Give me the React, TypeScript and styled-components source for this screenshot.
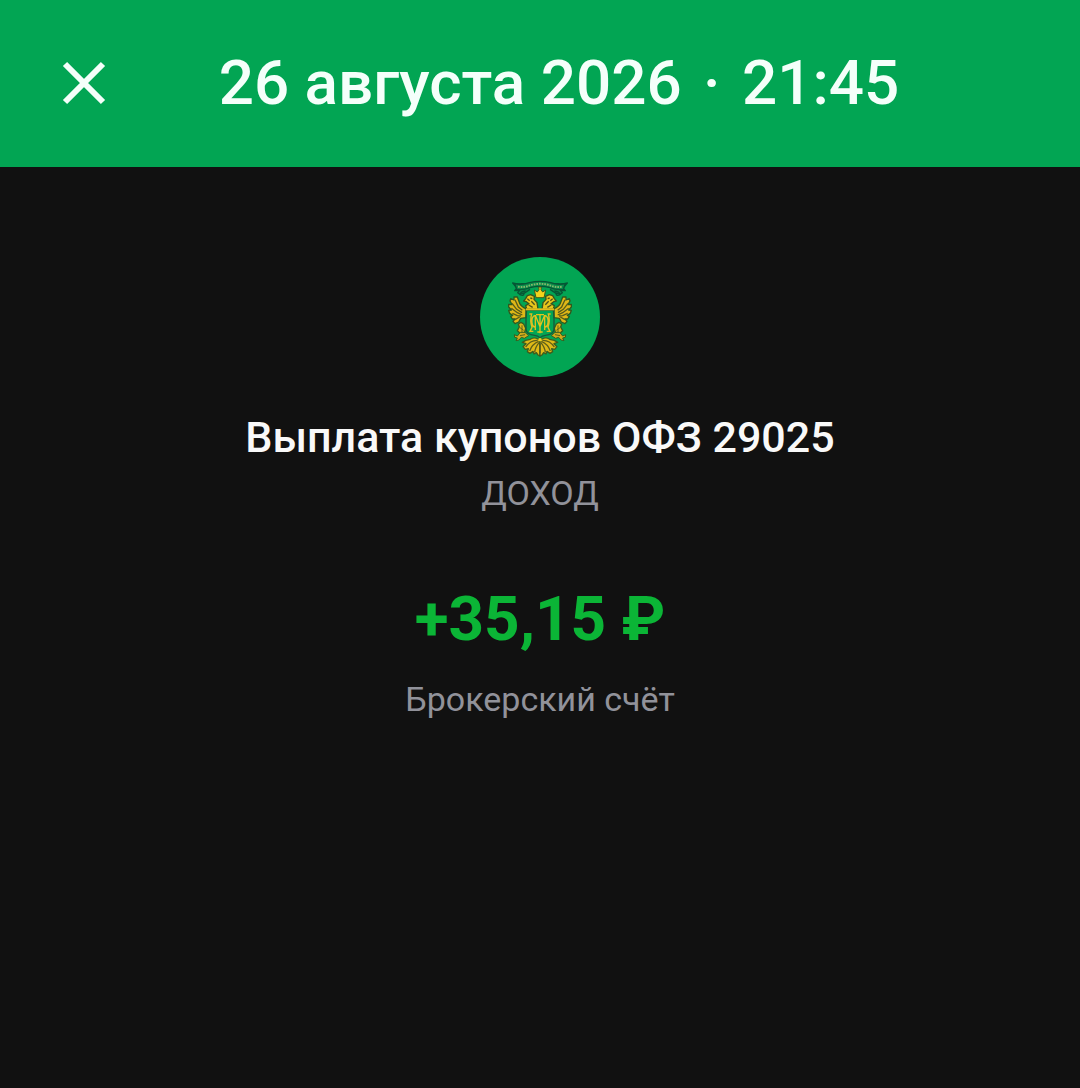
import styled, { createGlobalStyle } from "styled-components";

const GlobalStyle = createGlobalStyle`
  body {
    margin: 0;
    background: #111111;
    font-family: Roboto, "Open Sans", sans-serif;
  }
`;

const Page = styled.div`
  min-height: 100vh;
  display: flex;
  flex-direction: column;
`;

const Header = styled.header`
  display: flex;
  align-items: center;
  padding: 44px 68px 45px 62px;
  background: #02a553;
`;

const HeaderTitle = styled.h1`
  flex: 1;
  margin: 0;
  color: #f4fffa;
  font-size: 62px;
  font-weight: 500;
  line-height: 78px;
  text-align: center;
`;

const Separator = styled.span`
  margin: 0 6px;
`;

const CloseButton = styled.button`
  display: flex;
  padding: 0;
  border: 0;
  background: none;
  color: #f4fffa;
  cursor: pointer;
`;

const Details = styled.main`
  display: flex;
  flex-direction: column;
  align-items: center;
  padding: 90px 24px;
  text-align: center;
`;

const Title = styled.h2`
  margin: 32px 0 0;
  color: #f9f9f9;
  font-size: 43px;
  font-weight: 500;
  line-height: 56px;
`;

const Caption = styled.p`
  margin: 0;
  color: #91929a;
  font-size: 34px;
  font-weight: 400;
  line-height: 56px;
`;

const Amount = styled.p`
  margin: 58px 0 12px;
  color: #0bb536;
  font-size: 62px;
  font-weight: 700;
  line-height: 80px;
`;

// one side of the eagle, the other one is mirrored
const EmblemHalf = () => (
  <>
    <path
      d="M150 103 L134 114 L119 118 L113 113 L119 106 L104 107 L111 99 L98 84 Q113 88 126 86 L146 87"
      fill="#078b49"
      stroke="#075535"
      strokeWidth="4"
      strokeLinejoin="round"
    />
    <path
      d="M137 108 Q119 110 121 120 Q131 124 132 116"
      fill="none"
      stroke="#075535"
      strokeWidth="4"
    />
    <path
      d="M140 162 Q124 155 119 145 L112 126 L102 126 L102 135 L92 131 L90 138 L96 149 L86 148 L86 156 L94 165 L86 166 L89 175 L98 181 L92 184 L97 192 L105 192 L99 199 L105 206 L116 201 L122 190 L138 188 Z"
      fill="#dfb817"
      stroke="#2e5920"
      strokeWidth="4"
      strokeLinejoin="round"
    />
    <g fill="none" stroke="#575b1b" strokeWidth="4">
      <path d="M105 134 L115 156 L127 166" />
      <path d="M96 145 L110 163 L126 173" />
      <path d="M94 160 L112 173 L127 180" />
      <path d="M97 175 L112 182 L123 183" />
      <path d="M105 194 L119 186" />
    </g>
    <path
      d="M168 163 L140 162 L137 152 L147 146 L139 140 L131 138 L137 131 L142 122 L152 119 L163 124 L162 133 L171 143 L174 163 Z"
      fill="#e7c51c"
      stroke="#37531c"
      strokeWidth="4"
      strokeLinejoin="round"
    />
    <path
      d="M142 131 L149 137 M151 129 L157 131 M154 139 L164 149 M146 150 L158 157"
      fill="none"
      stroke="#4c501a"
      strokeWidth="4"
    />
    <path
      d="M123 202 L131 207 L137 220 L133 236 L122 236 L112 227 L118 216 L115 208 Z"
      fill="#dcb719"
      stroke="#365d20"
      strokeWidth="4"
      strokeLinejoin="round"
    />
    <path
      d="M121 232 L112 243 L103 239 L104 247 L112 249 L108 257 L117 255 L124 247 L133 250 L146 242 L135 232 Z"
      fill="#cfab1b"
      stroke="#365d20"
      strokeWidth="3"
      strokeLinejoin="round"
    />
    <path
      d="M120 218 L131 226 M126 211 L126 231 M120 242 L135 239"
      fill="none"
      stroke="#5c641d"
      strokeWidth="3"
    />
    <path
      d="M175 253 Q163 244 151 253 L137 256 L127 262 L138 266 L129 275 L136 283 L145 281 L142 290 L150 295 L159 289 L162 297 L169 293 L174 300 L180 303 L180 253 Z"
      fill="#dfb917"
      stroke="#3e5c1d"
      strokeWidth="4"
      strokeLinejoin="round"
    />
    <g fill="none" stroke="#5c5d1b" strokeWidth="4">
      <path d="M173 256 Q151 255 137 276" />
      <path d="M176 259 Q156 267 149 288" />
      <path d="M178 262 Q166 275 164 292" />
      <path d="M180 266 V294" />
    </g>
    <path
      d="M148 177 H155 Q149 197 156 217 L150 229 H160 M165 181 Q154 185 156 203 Q157 217 168 217 M166 180 V225"
      fill="none"
      stroke="#dfbf20"
      strokeWidth="4"
    />
  </>
);

const Emblem = () => (
  <svg width="120" height="120" viewBox="0 6 360 360" aria-hidden="true">
    <circle cx="180" cy="186" r="180" fill="#02a553" />
    <EmblemHalf />
    <g transform="translate(360 0) scale(-1 1)">
      <EmblemHalf />
    </g>
    <path
      d="M104 86 Q126 91 148 83 Q180 75 212 83 Q234 91 256 86 L250 103 Q230 106 210 98 Q180 90 150 98 Q130 106 110 103 Z"
      fill="#078b49"
      stroke="#075535"
      strokeWidth="4"
      strokeLinejoin="round"
    />
    <path
      d="M114 95 Q134 98 150 91 Q180 82 210 91 Q226 98 246 95"
      fill="none"
      stroke="#83b66b"
      strokeWidth="6"
      strokeDasharray="5 3"
    />
    <path
      d="M168 128 L163 105 L172 111 L177 104 L176 96 L184 96 L183 104 L188 111 L197 105 L192 128 Z"
      fill="#f4d31b"
      stroke="#41591d"
      strokeWidth="3"
      strokeLinejoin="round"
    />
    <path
      d="M138 165 L222 165 L222 222 Q221 239 196 241 Q187 242 180 248 Q173 242 164 241 Q139 239 138 222 Z"
      fill="#02a553"
      fillOpacity="0"
      stroke="#17583a"
      strokeWidth="4"
    />
    <path d="M138 163 H222" stroke="#e0bd1e" strokeWidth="6" />
    <path
      d="M180 178 V235 M168 179 H192 M166 181 L180 215 L194 181 M172 231 H188"
      fill="none"
      stroke="#e4c41e"
      strokeWidth="4"
    />
    <circle cx="180" cy="254" r="5" fill="#efd121" />
  </svg>
);

const App = () => {
  return (
    <Page>
      <GlobalStyle />
      <Header>
        <CloseButton type="button" aria-label="Закрыть">
          <svg width="44" height="44" viewBox="0 0 44 44">
            <path d="M3 3 L41 41 M41 3 L3 41" stroke="currentColor" strokeWidth="6" />
          </svg>
        </CloseButton>
        <HeaderTitle>
          26 августа 2026 <Separator>·</Separator> 21:45
        </HeaderTitle>
      </Header>
      <Details>
        <Emblem />
        <Title>Выплата купонов ОФЗ 29025</Title>
        <Caption>ДОХОД</Caption>
        <Amount>+35,15 ₽</Amount>
        <Caption>Брокерский счёт</Caption>
      </Details>
    </Page>
  );
};

export default App;
